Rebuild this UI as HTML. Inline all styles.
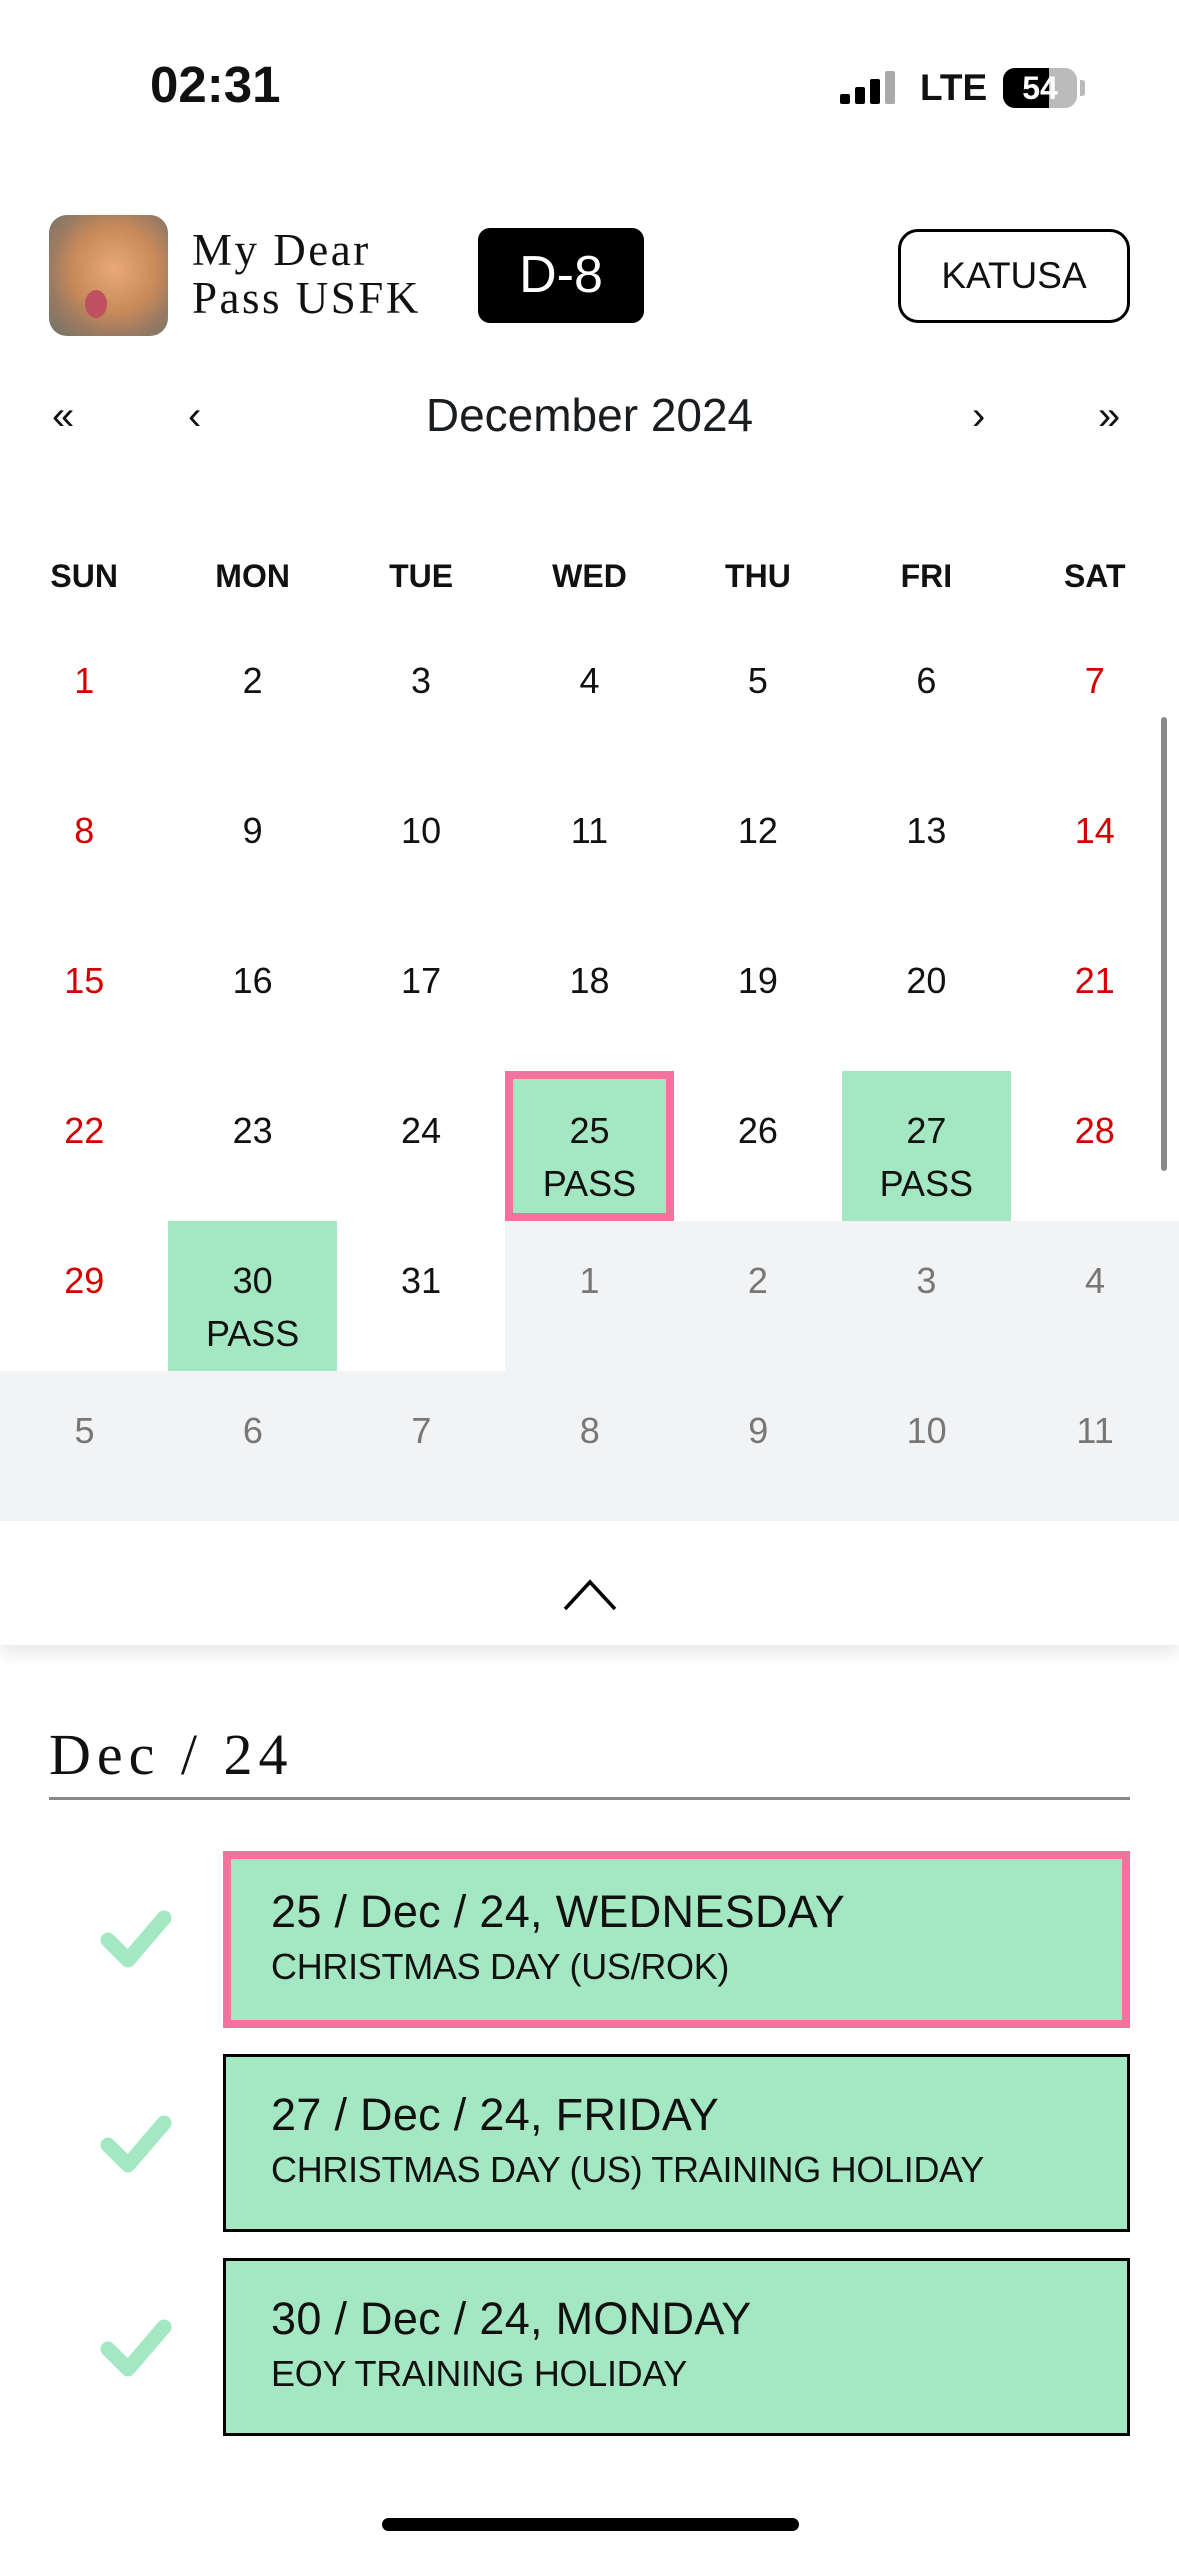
<!DOCTYPE html>
<html><head><meta charset="utf-8"><style>
*{margin:0;padding:0;box-sizing:border-box}
body{width:1179px;height:2556px;background:#fff;position:relative;overflow:hidden;font-family:"Liberation Sans",Arial,sans-serif;color:#111}
.a{position:absolute}
.cell{position:absolute;width:168.43px;height:150px;text-align:center}
.cell .n{position:absolute;left:0;right:0;top:40px;font-size:36px;line-height:40px}
.cell .p{position:absolute;left:0;right:0;top:93px;font-size:36px;line-height:40px}
.red .n{color:#d40000}
.oth{background:#f2f3f5}
.oth .n{color:#777}
.grn{background:#a3e8c2}
.wk{position:absolute;top:556px;width:168.43px;text-align:center;font-weight:bold;font-size:32px;line-height:40px}
.card{position:absolute;left:223px;width:907px;background:#a3e8c2;border:3px solid #000}
.card .t{position:absolute;left:45px;top:32px;font-size:45px;line-height:52px;letter-spacing:0.3px}
.card .s{position:absolute;left:45px;top:92px;font-size:36px;line-height:42px;letter-spacing:-0.3px}
</style></head><body>
<div class="a" style="left:150px;top:57px;font-size:51px;font-weight:bold;line-height:56px">02:31</div>
<svg class="a" style="left:838px;top:70px" width="62" height="36"><rect x="2" y="24" width="10" height="10" rx="2"/><rect x="17" y="17" width="10" height="17" rx="2"/><rect x="32" y="9" width="10" height="25" rx="2"/><rect x="47" y="1" width="10" height="33" rx="2" fill="#aaa"/></svg>
<div class="a" style="left:920px;top:66px;font-size:37px;font-weight:bold;line-height:44px">LTE</div>
<div class="a" style="left:1003px;top:68px;width:74px;height:40px;border-radius:12px;background:#bbb;overflow:hidden"><div style="width:46px;height:40px;background:#000"></div></div>
<div class="a" style="left:1003px;top:68px;width:74px;height:40px;font-size:32px;font-weight:bold;line-height:40px;text-align:center;color:#fff">54</div>
<div class="a" style="left:1080px;top:80px;width:5px;height:16px;border-radius:0 3px 3px 0;background:#bbb"></div>

<div class="a" style="left:49px;top:215px;width:119px;height:121px;border-radius:18px;background:radial-gradient(ellipse at 55% 45%,#e9a978 0%,#c98a5a 45%,#9a7a62 70%,#6d7468 100%)"></div>
<div class="a" style="left:85px;top:290px;width:22px;height:28px;border-radius:50%;background:#c05060"></div>
<div class="a" style="left:192px;top:226px;font-family:'Liberation Serif',serif;font-size:45px;line-height:48px;letter-spacing:2.5px">My Dear<br>Pass USFK</div>
<div class="a" style="left:478px;top:228px;width:166px;height:95px;background:#000;border-radius:12px;color:#fff;font-size:52px;line-height:95px;text-align:center">D-8</div>
<div class="a" style="left:898px;top:229px;width:232px;height:94px;border:3px solid #000;border-radius:20px;font-size:37px;line-height:88px;text-align:center">KATUSA</div>

<div class="a" style="left:52px;top:392px;font-size:40px;line-height:48px">«</div>
<div class="a" style="left:188px;top:392px;font-size:40px;line-height:48px">‹</div>
<div class="a" style="left:0;width:1179px;top:388px;font-size:46px;line-height:54px;text-align:center;color:#1a1d20">December 2024</div>
<div class="a" style="left:972px;top:392px;font-size:40px;line-height:48px">›</div>
<div class="a" style="left:1098px;top:392px;font-size:40px;line-height:48px">»</div>

<div class="wk" style="left:0">SUN</div><div class="wk" style="left:168.43px">MON</div><div class="wk" style="left:336.86px">TUE</div><div class="wk" style="left:505.29px">WED</div><div class="wk" style="left:673.71px">THU</div><div class="wk" style="left:842.14px">FRI</div><div class="wk" style="left:1010.57px">SAT</div>

<div class="cell red" style="left:0;top:621px"><div class="n">1</div></div>
<div class="cell" style="left:168.43px;top:621px"><div class="n">2</div></div>
<div class="cell" style="left:336.86px;top:621px"><div class="n">3</div></div>
<div class="cell" style="left:505.29px;top:621px"><div class="n">4</div></div>
<div class="cell" style="left:673.71px;top:621px"><div class="n">5</div></div>
<div class="cell" style="left:842.14px;top:621px"><div class="n">6</div></div>
<div class="cell red" style="left:1010.57px;top:621px"><div class="n">7</div></div>

<div class="cell red" style="left:0;top:771px"><div class="n">8</div></div>
<div class="cell" style="left:168.43px;top:771px"><div class="n">9</div></div>
<div class="cell" style="left:336.86px;top:771px"><div class="n">10</div></div>
<div class="cell" style="left:505.29px;top:771px"><div class="n">11</div></div>
<div class="cell" style="left:673.71px;top:771px"><div class="n">12</div></div>
<div class="cell" style="left:842.14px;top:771px"><div class="n">13</div></div>
<div class="cell red" style="left:1010.57px;top:771px"><div class="n">14</div></div>

<div class="cell red" style="left:0;top:921px"><div class="n">15</div></div>
<div class="cell" style="left:168.43px;top:921px"><div class="n">16</div></div>
<div class="cell" style="left:336.86px;top:921px"><div class="n">17</div></div>
<div class="cell" style="left:505.29px;top:921px"><div class="n">18</div></div>
<div class="cell" style="left:673.71px;top:921px"><div class="n">19</div></div>
<div class="cell" style="left:842.14px;top:921px"><div class="n">20</div></div>
<div class="cell red" style="left:1010.57px;top:921px"><div class="n">21</div></div>

<div class="cell red" style="left:0;top:1071px"><div class="n">22</div></div>
<div class="cell" style="left:168.43px;top:1071px"><div class="n">23</div></div>
<div class="cell" style="left:336.86px;top:1071px"><div class="n">24</div></div>
<div class="cell grn" style="left:505.29px;top:1071px;border:8px solid #f7719f"><div class="n" style="top:32px">25</div><div class="p" style="top:85px">PASS</div></div>
<div class="cell" style="left:673.71px;top:1071px"><div class="n">26</div></div>
<div class="cell grn" style="left:842.14px;top:1071px"><div class="n">27</div><div class="p">PASS</div></div>
<div class="cell red" style="left:1010.57px;top:1071px"><div class="n">28</div></div>

<div class="cell red" style="left:0;top:1221px"><div class="n">29</div></div>
<div class="cell grn" style="left:168.43px;top:1221px"><div class="n">30</div><div class="p">PASS</div></div>
<div class="cell" style="left:336.86px;top:1221px"><div class="n">31</div></div>
<div class="cell oth" style="left:505.29px;top:1221px"><div class="n">1</div></div>
<div class="cell oth" style="left:673.71px;top:1221px"><div class="n">2</div></div>
<div class="cell oth" style="left:842.14px;top:1221px"><div class="n">3</div></div>
<div class="cell oth" style="left:1010.57px;top:1221px;width:169px"><div class="n">4</div></div>

<div class="cell oth" style="left:0;top:1371px;width:169px"><div class="n">5</div></div>
<div class="cell oth" style="left:168.43px;top:1371px;width:169px"><div class="n">6</div></div>
<div class="cell oth" style="left:336.86px;top:1371px;width:169px"><div class="n">7</div></div>
<div class="cell oth" style="left:505.29px;top:1371px;width:169px"><div class="n">8</div></div>
<div class="cell oth" style="left:673.71px;top:1371px;width:169px"><div class="n">9</div></div>
<div class="cell oth" style="left:842.14px;top:1371px;width:169px"><div class="n">10</div></div>
<div class="cell oth" style="left:1010.57px;top:1371px;width:169px"><div class="n">11</div></div>

<div class="a" style="left:1161px;top:717px;width:6px;height:454px;border-radius:3px;background:#8a8a8a"></div>

<div class="a" style="left:0;top:1521px;width:1179px;height:124px;background:#fff;box-shadow:0 10px 14px rgba(0,0,0,0.08)"></div>
<svg class="a" style="left:562px;top:1578px" width="56" height="34"><path d="M3 31 L28 4 L53 31" fill="none" stroke="#000" stroke-width="3.5"/></svg>

<div class="a" style="left:49px;top:1722px;font-family:'Liberation Serif',serif;font-size:58px;line-height:66px;color:#111;letter-spacing:6px">Dec / 24</div>
<div class="a" style="left:49px;top:1797px;width:1081px;height:3px;background:#888"></div>

<svg class="a" style="left:100px;top:1908px" width="72" height="60"><path d="M8 32 L28 52 L64 10" fill="none" stroke="#a3e8c2" stroke-width="15" stroke-linecap="round" stroke-linejoin="round"/></svg>
<svg class="a" style="left:100px;top:2113px" width="72" height="60"><path d="M8 32 L28 52 L64 10" fill="none" stroke="#a3e8c2" stroke-width="15" stroke-linecap="round" stroke-linejoin="round"/></svg>
<svg class="a" style="left:100px;top:2317px" width="72" height="60"><path d="M8 32 L28 52 L64 10" fill="none" stroke="#a3e8c2" stroke-width="15" stroke-linecap="round" stroke-linejoin="round"/></svg>

<div class="card" style="top:1851px;height:177px;border:8px solid #f7719f"><div class="t" style="left:40px;top:27px">25 / Dec / 24, WEDNESDAY</div><div class="s" style="left:40px;top:87px">CHRISTMAS DAY (US/ROK)</div></div>
<div class="card" style="top:2054px;height:178px"><div class="t">27 / Dec / 24, FRIDAY</div><div class="s">CHRISTMAS DAY (US) TRAINING HOLIDAY</div></div>
<div class="card" style="top:2258px;height:178px"><div class="t">30 / Dec / 24, MONDAY</div><div class="s">EOY TRAINING HOLIDAY</div></div>

<div class="a" style="left:382px;top:2518px;width:417px;height:13px;border-radius:7px;background:#000"></div>
</body></html>
